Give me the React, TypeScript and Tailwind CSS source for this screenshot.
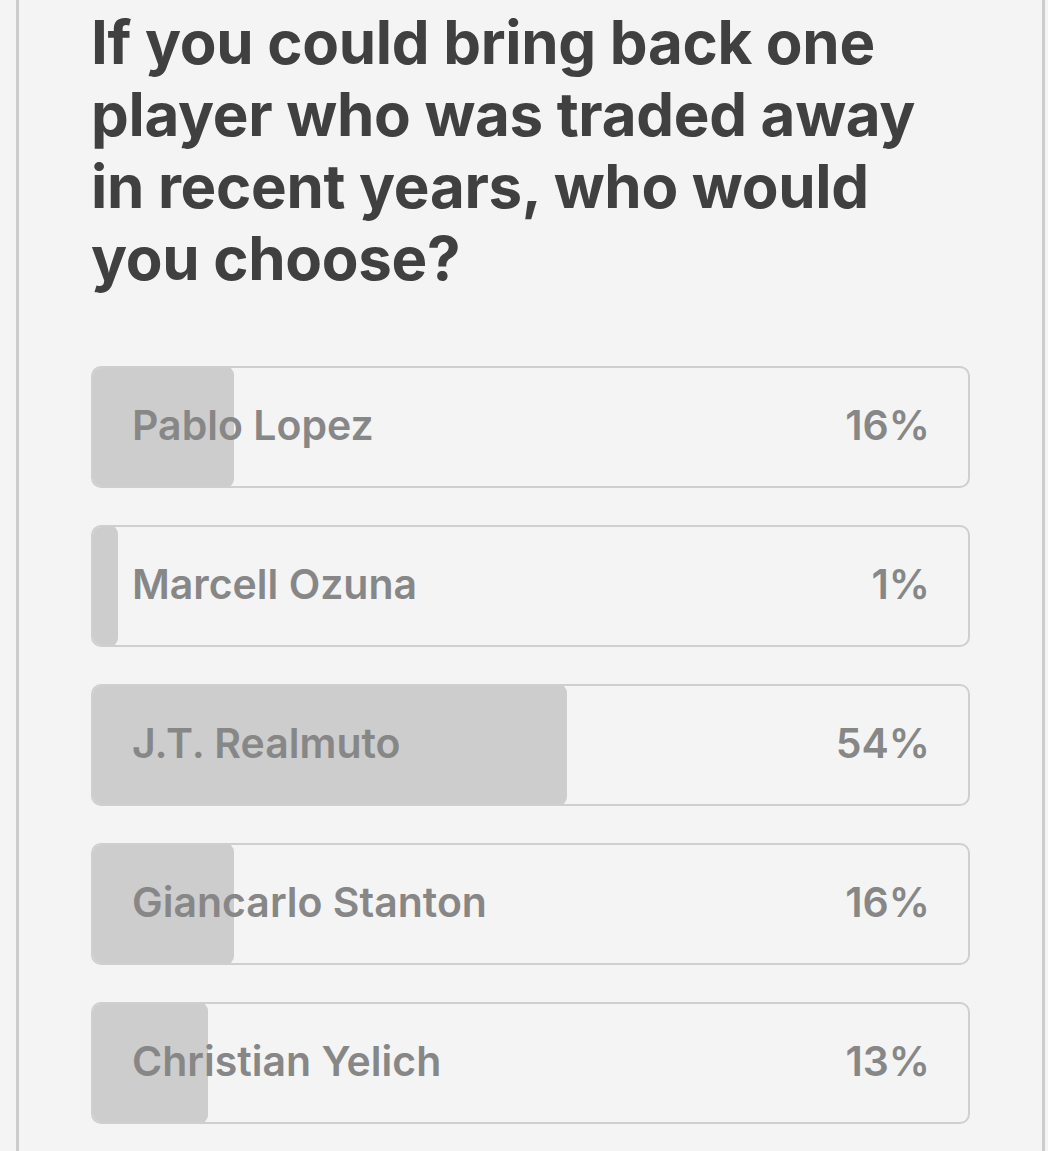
const options = [
  { name: "Pablo Lopez", pct: 16 },
  { name: "Marcell Ozuna", pct: 1 },
  { name: "J.T. Realmuto", pct: 54 },
  { name: "Giancarlo Stanton", pct: 16 },
  { name: "Christian Yelich", pct: 13 },
];

function PollOption({ name, pct }: { name: string; pct: number }) {
  return (
    <div className="relative h-[122px] rounded-[10px] border-2 border-[#cfcfcf] overflow-hidden">
      {/* result bar, sits over the border on the left */}
      <div
        className="absolute -left-[2px] -top-[2px] -bottom-[2px] rounded-[9px] bg-[#cdcdcd]"
        style={{ width: `max(27px, calc(${pct}% + 3px))` }}
      />
      <div className="relative flex h-full items-center justify-between pl-[39px] pr-[38px] pb-[2px] text-[41px] font-semibold text-[#878787]">
        <span>{name}</span>
        <span>{pct}%</span>
      </div>
    </div>
  );
}

export default function App() {
  return (
    <div className="h-screen overflow-hidden bg-[#f4f4f4] font-['Inter','Liberation_Sans',sans-serif]">
      <div className="ml-[16px] mr-[3px] h-full border-x-[3px] border-[#cccccc] px-[72px] pt-[6px]">
        <h1 className="text-[60px] font-bold leading-[72px] tracking-[-0.3px] text-[#404040]">
          If you could bring back one
          <br />
          player who was traded away
          <br />
          in recent years, who would
          <br />
          you choose?
        </h1>
        <div className="mt-[72px] flex flex-col gap-[37px]">
          {options.map((o) => (
            <PollOption key={o.name} name={o.name} pct={o.pct} />
          ))}
        </div>
      </div>
    </div>
  );
}
